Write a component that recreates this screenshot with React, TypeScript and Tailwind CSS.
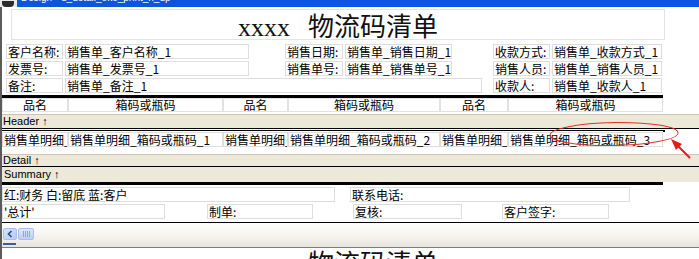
import React from "react";

const cell =
  "h-[15px] shrink-0 border border-[#dedede] px-[1px] text-[12px] leading-[13px] whitespace-nowrap overflow-x-clip text-black";
const head =
  "h-[14px] shrink-0 border border-[#e2e2e2] text-center text-[12px] leading-[12px] whitespace-nowrap overflow-x-clip text-black";
const band =
  "h-[14px] bg-[#ece9d8] border-t border-[#c9c6b6] pl-[1px] text-[11px] leading-[12px] font-['Liberation_Sans',sans-serif] text-black";

function Title() {
  return (
    <div className="ml-[9px] w-[654px] h-[31px] border border-[#e4e4e4] pl-[226px] pt-[5px] text-[26px] leading-[26px] whitespace-nowrap font-['Liberation_Serif','Noto_Sans_CJK_SC',serif] text-[#111]">
      xxxx<span className="ml-[18px]">物流码清单</span>
    </div>
  );
}

export default function App() {
  const detail = [
    ["w-[66px]", "销售单明细_"],
    ["w-[155px]", "销售单明细_箱码或瓶码_1"],
    ["w-[65px]", "销售单明细_"],
    ["w-[152px]", "销售单明细_箱码或瓶码_2"],
    ["w-[68px]", "销售单明细_"],
    ["w-[155px]", "销售单明细_箱码或瓶码_3"],
  ];
  const heads = [
    ["w-[66px]", "品名"],
    ["w-[155px]", "箱码或瓶码"],
    ["w-[65px]", "品名"],
    ["w-[152px]", "箱码或瓶码"],
    ["w-[68px]", "品名"],
    ["w-[155px]", "箱码或瓶码"],
  ];

  return (
    <div className="relative w-[699px] h-[259px] overflow-hidden bg-white font-['Noto_Sans_CJK_SC',sans-serif]">
      {/* window title bar, mostly scrolled off */}
      <div className="flex h-[7px] overflow-hidden bg-[#0a56df]">
        <div className="w-[17px] h-[7px] bg-[#e9e9e9] flex items-end pl-[2px]">
          <div className="w-[12px] h-[6px] rounded-b-[4px] bg-[#2b2b2b]" />
        </div>
        <div className="ml-[4px] -mt-[8px] text-[10px] leading-[12px] text-white whitespace-nowrap font-['Liberation_Sans',sans-serif]">
          Design - d_detail_oko_print_n_up
        </div>
      </div>

      <div className="border-l-2 border-[#5b5b5b] h-[252px]">
        <div className="pt-[2px]">
          <Title />
        </div>

        {/* header fields */}
        <div className="flex mt-[4px]">
          <div className={`${cell} ml-[4px] w-[57px]`}>客户名称:</div>
          <div className={`${cell} ml-[2px] w-[184px]`}>销售单_客户名称_1</div>
          <div className={`${cell} ml-[36px] w-[58px]`}>销售日期:</div>
          <div className={`${cell} ml-[2px] w-[107px]`}>销售单_销售日期_1</div>
          <div className={`${cell} ml-[41px] w-[57px]`}>收款方式:</div>
          <div className={`${cell} ml-[2px] w-[110px]`}>销售单_收款方式_1</div>
        </div>
        <div className="flex mt-[2px]">
          <div className={`${cell} ml-[4px] w-[57px]`}>发票号:</div>
          <div className={`${cell} ml-[2px] w-[184px]`}>销售单_发票号_1</div>
          <div className={`${cell} ml-[36px] w-[58px]`}>销售单号:</div>
          <div className={`${cell} ml-[2px] w-[107px]`}>销售单_销售单号_1</div>
          <div className={`${cell} ml-[41px] w-[57px]`}>销售人员:</div>
          <div className={`${cell} ml-[2px] w-[110px]`}>销售单_销售人员_1</div>
        </div>
        <div className="flex mt-[2px]">
          <div className={`${cell} ml-[4px] w-[57px]`}>备注:</div>
          <div className={`${cell} ml-[2px] w-[417px]`}>销售单_备注_1</div>
          <div className={`${cell} ml-[11px] w-[57px]`}>收款人:</div>
          <div className={`${cell} ml-[2px] w-[110px]`}>销售单_收款人_1</div>
        </div>

        <div className="mt-[2px] h-[3px] w-[661px] bg-black" />

        {/* column headers */}
        <div className="flex">
          {heads.map(([w, t], i) => (
            <div key={i} className={`${head} ${w}`}>
              {t}
            </div>
          ))}
        </div>

        <div className="mt-[2px]">
          <div className={band}>Header ↑</div>
        </div>
        <div className="h-px bg-black" />
        <div className="h-px" />
        <div className="flex items-start">
          <div className="h-px w-[661px] bg-black" />
          <div className="w-[2px] h-[2px] bg-black" />
        </div>

        {/* detail row */}
        <div className="h-[22px]">
          <div className="flex">
            {detail.map(([w, t], i) => (
              <div key={i} className={`${cell} ${w} px-0`}>
                {t}
              </div>
            ))}
          </div>
        </div>

        <div className="h-[12px] bg-[#ece9d8] border-t border-[#c9c6b6] pl-[1px] text-[11px] leading-[10px] font-['Liberation_Sans',sans-serif] text-black">
          Detail ↑
        </div>
        <div className="h-px bg-black" />
        <div className="h-[15px] bg-[#ece9d8] pl-[2px] pt-[1px] text-[11px] leading-[12px] font-['Liberation_Sans',sans-serif] text-black">
          Summary ↑
        </div>
        <div className="h-[3px] w-[661px] bg-black" />

        {/* summary fields */}
        <div className="flex mt-[2px]">
          <div className={`${cell} w-[333px]`}>红:财务 白:留底 蓝:客户</div>
          <div className={`${cell} ml-[15px] w-[280px]`}>联系电话:</div>
        </div>
        <div className="flex mt-[2px]">
          <div className={`${cell} w-[163px]`}>'总计'</div>
          <div className={`${cell} ml-[42px] w-[106px]`}>制单:</div>
          <div className={`${cell} ml-[40px] w-[109px]`}>复核:</div>
          <div className={`${cell} ml-[40px] w-[107px]`}>客户签字:</div>
        </div>

        <div className="mt-[3px] h-px bg-black" />

        {/* horizontal scrollbar */}
        <div className="h-[24px] bg-linear-to-b from-[#fefefd] via-[#f6f5f1] to-[#e6e4da]">
          <div className="flex pt-[5px] pl-px gap-px">
            <div className="w-[14px] h-[12px] rounded-[2px] border border-[#a9bff0] bg-linear-to-br from-[#d9e4fd] to-[#b5c9f8] flex items-center justify-center">
              <svg width="6" height="8" viewBox="0 0 6 8">
                <path d="M4.5 1 L1.5 4 L4.5 7" stroke="#2f4a86" strokeWidth="1.6" fill="none" />
              </svg>
            </div>
            <div className="w-[16px] h-[12px] rounded-[2px] border border-[#a9bff0] bg-linear-to-b from-[#dfe8fe] to-[#bccdf8] flex items-center justify-center gap-px">
              <div className="w-px h-[6px] bg-[#8ea6e0]" />
              <div className="w-px h-[6px] bg-[#8ea6e0]" />
              <div className="w-px h-[6px] bg-[#8ea6e0]" />
              <div className="w-px h-[6px] bg-[#8ea6e0]" />
            </div>
          </div>
          <div className="mt-[3px] ml-px w-[13px] h-[2px] bg-[#3b5c9f]" />
        </div>
        <div className="h-px bg-[#7d7d7d]" />

        {/* next page */}
        <div className="pt-[4px]">
          <div className="ml-[9px] w-[654px] pl-[227px] text-[26px] leading-[26px] whitespace-nowrap font-['Liberation_Serif','Noto_Sans_CJK_SC',serif] text-[#111]">
            xxxx<span className="ml-[18px]">物流码清单</span>
          </div>
        </div>
      </div>

      {/* red annotation */}
      <svg className="absolute left-0 top-0 pointer-events-none" width="699" height="259">
        <ellipse cx="614" cy="134" rx="64" ry="11.5" fill="none" stroke="#e0302a" strokeWidth="1" transform="rotate(-1 614 134)" />
        <line x1="690" y1="158" x2="677" y2="145" stroke="#e41c1c" strokeWidth="2" />
        <polygon points="671,139 682,144 676,150" fill="#e41c1c" />
      </svg>
    </div>
  );
}
